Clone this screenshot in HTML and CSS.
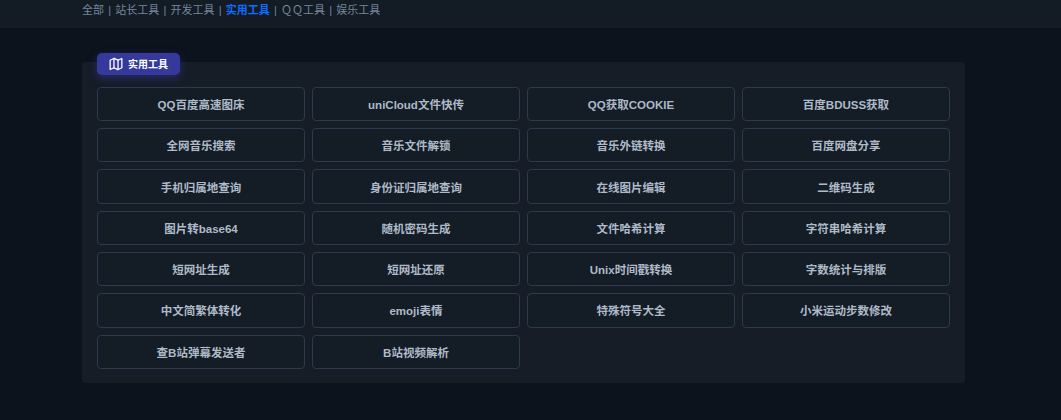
FILE: index.html
```html
<!DOCTYPE html>
<html lang="zh-CN">
<head>
  <meta charset="UTF-8">
  <meta name="viewport" content="width=device-width, initial-scale=1.0">
  <title>实用工具</title>
  <link rel="stylesheet" href="styles.css">
</head>
<body>
  <nav class="topnav">
    <a href="#">全部</a><span class="sep">|</span><a href="#">站长工具</a><span class="sep">|</span><a href="#">开发工具</a><span class="sep">|</span><a href="#" class="active">实用工具</a><span class="sep">|</span><a href="#">ＱＱ工具</a><span class="sep">|</span><a href="#">娱乐工具</a>
  </nav>
  <main class="panel">
    <div class="badge">
      <svg class="badge-icon" viewBox="0 0 24 24" fill="none" stroke="currentColor" stroke-width="2.2" stroke-linejoin="round" stroke-linecap="round">
        <path d="M2 5.500l6.500-3 7 3 6.500-3v16l-6.500 3-7-3-6.500 3z"/>
        <path d="M8.500 2.500v16"/>
        <path d="M15.500 5.500v16"/>
      </svg>
      <span class="badge-text">实用工具</span>
    </div>
    <div class="tools">
      <a class="tool" href="#">QQ百度高速图床</a>
      <a class="tool" href="#">uniCloud文件快传</a>
      <a class="tool" href="#">QQ获取COOKIE</a>
      <a class="tool" href="#">百度BDUSS获取</a>
      <a class="tool" href="#">全网音乐搜索</a>
      <a class="tool" href="#">音乐文件解锁</a>
      <a class="tool" href="#">音乐外链转换</a>
      <a class="tool" href="#">百度网盘分享</a>
      <a class="tool" href="#">手机归属地查询</a>
      <a class="tool" href="#">身份证归属地查询</a>
      <a class="tool" href="#">在线图片编辑</a>
      <a class="tool" href="#">二维码生成</a>
      <a class="tool" href="#">图片转base64</a>
      <a class="tool" href="#">随机密码生成</a>
      <a class="tool" href="#">文件哈希计算</a>
      <a class="tool" href="#">字符串哈希计算</a>
      <a class="tool" href="#">短网址生成</a>
      <a class="tool" href="#">短网址还原</a>
      <a class="tool" href="#">Unix时间戳转换</a>
      <a class="tool" href="#">字数统计与排版</a>
      <a class="tool" href="#">中文简繁体转化</a>
      <a class="tool" href="#">emoji表情</a>
      <a class="tool" href="#">特殊符号大全</a>
      <a class="tool" href="#">小米运动步数修改</a>
      <a class="tool" href="#">查B站弹幕发送者</a>
      <a class="tool" href="#">B站视频解析</a>
    </div>
  </main>
</body>
</html>
```

FILE: styles.css
```css
* {
  box-sizing: border-box;
}
html, body {
  height: 100%;
}
body {
  margin: 0;
  overflow: hidden;
  font-family: "Liberation Sans", "Noto Sans CJK SC", sans-serif;
  background-color: #0c131c;
}
.topnav {
  height: 28px;
  padding: 3px 0 0 82px;
  background-color: #131b25;
  font-size: 11px;
  line-height: 15px;
}
.topnav a {
  color: #74879c;
  text-decoration: none;
}
.topnav a.active {
  color: #0d6efd;
  font-weight: bold;
}
.sep {
  margin: 0 4.200px;
  color: #74879c;
}
.panel {
  position: relative;
  width: 883px;
  height: 321px;
  margin: 34px 0 0 82px;
  padding: 24.800px 15px 0;
  background-color: #161d27;
  border-radius: 4px;
}
.badge {
  position: absolute;
  top: -9px;
  left: 15px;
  display: flex;
  align-items: center;
  gap: 5px;
  width: 83px;
  height: 22px;
  padding-left: 12px;
  background-color: #35399b;
  border-radius: 5px;
  box-shadow: 0 3px 8px rgba(53, 57, 155, 0.55);
  color: #fff;
  font-size: 10px;
  font-weight: bold;
}
.badge-icon {
  width: 14px;
  height: 14px;
}
.badge-text {
  margin-bottom: 1px;
}
.tools {
  display: grid;
  grid-template-columns: repeat(4, 208px);
  grid-auto-rows: 34.300px;
  gap: 7px;
}
.tool {
  display: flex;
  align-items: center;
  justify-content: center;
  background-color: #141c26;
  border: 1px solid #2b3a4c;
  border-radius: 4px;
  color: #aebac8;
  font-size: 11.500px;
  font-weight: bold;
  text-decoration: none;
}
```
